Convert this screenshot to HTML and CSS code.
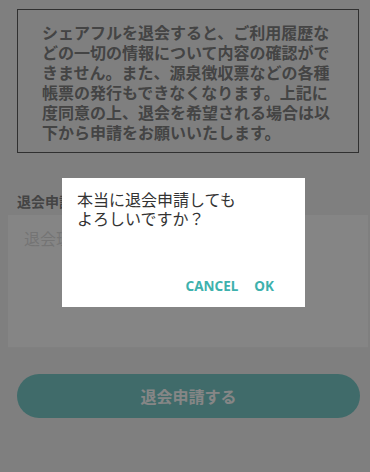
FILE: index.html
```html
<!DOCTYPE html>
<html lang="ja">
<head>
<meta charset="utf-8">
<link rel="stylesheet" href="styles.css">
</head>
<body>
<div class="page">
  <div class="notice">シェアフルを退会すると、ご利用履歴などの一切の情報について内容の確認ができません。また、源泉徴収票などの各種帳票の発行もできなくなります。上記に度同意の上、退会を希望される場合は以下から申請をお願いいたします。</div>
  <div class="label">退会申請理由</div>
  <div class="textarea">退会理由を入力してください</div>
  <div class="submit">退会申請する</div>
</div>
<div class="overlay">
  <div class="dialog">
    <div class="message">本当に退会申請しても<br>よろしいですか？</div>
    <div class="actions">
      <span class="action">CANCEL</span>
      <span class="action">OK</span>
    </div>
  </div>
</div>
</body>
</html>
```
FILE: styles.css
```css
html, body {
  margin: 0;
  padding: 0;
}
body {
  width: 370px;
  height: 472px;
  overflow: hidden;
  background: #f0f0f0;
  font-family: "Noto Sans CJK JP", "Noto Sans", sans-serif;
}
.page {
  display: flex;
  flex-direction: column;
  padding-top: 9px;
}
.notice {
  margin: 0 11px 0 17px;
  border: 1px solid #5c5c5c;
  padding: 12px 24px 10px 24px;
  font-size: 16px;
  line-height: 20px;
  font-weight: bold;
  color: #808080;
}
.label {
  margin: 38px 0 0 17px;
  font-size: 14px;
  line-height: 20px;
  font-weight: bold;
  color: #808080;
}
.textarea {
  margin: 4px 2px 0 8px;
  height: 133px;
  box-sizing: border-box;
  padding: 11px 16px;
  background: #fcfcfc;
  border-bottom: 1px solid #f2f2f2;
  font-size: 16px;
  line-height: 24px;
  color: #dcdcdc;
}
.submit {
  margin: 26px 10px 0 17px;
  height: 44px;
  border-radius: 22px;
  background: #77cac8;
  color: #fff;
  font-size: 16px;
  font-weight: bold;
  display: flex;
  align-items: center;
  justify-content: center;
  opacity: 0.98;
}
.overlay {
  position: fixed;
  inset: 0;
  background: rgba(0, 0, 0, 0.47);
  display: flex;
  justify-content: flex-start;
  align-items: flex-start;
  padding: 178px 0 0 62px;
  box-sizing: border-box;
}
.dialog {
  width: 243px;
  height: 129px;
  background: #fff;
  box-sizing: border-box;
  padding: 12px 0 0 15px;
  display: flex;
  flex-direction: column;
}
.message {
  font-size: 16px;
  line-height: 19px;
  color: #333;
}
.actions {
  margin-top: auto;
  display: flex;
  justify-content: flex-end;
  gap: 16px;
  padding: 0 31px 11px 0;
}
.action {
  font-family: "Noto Sans", sans-serif;
  font-weight: bold;
  font-size: 13.5px;
  line-height: 20px;
  color: #3eb1ad;
}
```
